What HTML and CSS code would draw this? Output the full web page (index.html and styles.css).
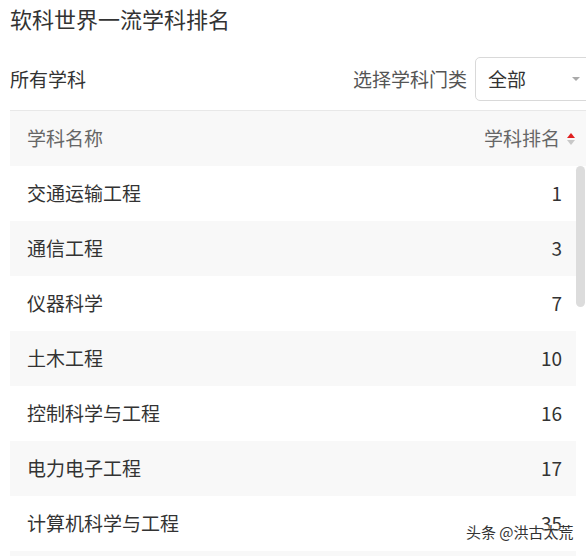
FILE: index.html
```html
<!DOCTYPE html>
<html lang="zh">
<head>
<meta charset="utf-8">
<link rel="stylesheet" href="styles.css">
</head>
<body>
<div class="page">
  <h1 class="title">软科世界一流学科排名</h1>
  <div class="filter">
    <span class="filter-label">所有学科</span>
    <div class="filter-right">
      <span class="select-label">选择学科门类</span>
      <div class="select">
        <span>全部</span>
        <span class="caret"></span>
      </div>
    </div>
  </div>
  <div class="table">
    <div class="thead">
      <span>学科名称</span>
      <span class="sort-head">学科排名
        <span class="sorter"><i class="up"></i><i class="down"></i></span>
      </span>
    </div>
    <div class="tbody-wrap">
      <div class="tbody">
        <div class="row"><span>交通运输工程</span><span>1</span></div>
        <div class="row alt"><span>通信工程</span><span>3</span></div>
        <div class="row"><span>仪器科学</span><span>7</span></div>
        <div class="row alt"><span>土木工程</span><span>10</span></div>
        <div class="row"><span>控制科学与工程</span><span>16</span></div>
        <div class="row alt"><span>电力电子工程</span><span>17</span></div>
        <div class="row"><span>计算机科学与工程</span><span>35</span></div>
        <div class="row alt"><span>&nbsp;</span><span>&nbsp;</span></div>
      </div>
      <div class="scrollbar"><div class="thumb"></div></div>
    </div>
  </div>
</div>
<div class="watermark">头条 @洪古太荒</div>
</body>
</html>
```

FILE: styles.css
```css
html, body {
  margin: 0;
  padding: 0;
  background: #fff;
  overflow: hidden;
  width: 586px;
  height: 556px;
}
body {
  font-family: "Noto Sans CJK SC", "Noto Sans", sans-serif;
  color: #333;
  position: relative;
}
.page {
  padding-left: 10px;
}
.title {
  margin: 0;
  font-size: 22px;
  font-weight: normal;
  line-height: 36px;
  height: 38px;
  color: #333;
}
.filter {
  margin-top: 19px;
  height: 44px;
  padding-bottom: 9px;
  border-bottom: 1px solid #e8e8e8;
  display: flex;
  align-items: center;
  justify-content: space-between;
}
.filter-label {
  font-size: 19px;
  color: #333;
  padding-bottom: 2px;
}
.filter-right {
  display: flex;
  align-items: center;
  gap: 8px;
  margin-right: -12px;
}
.select-label {
  font-size: 19px;
  color: #555;
  padding-bottom: 2px;
}
.select {
  box-sizing: border-box;
  width: 123px;
  height: 44px;
  border: 1px solid #d9d9d9;
  border-radius: 5px;
  display: flex;
  align-items: center;
  justify-content: space-between;
  padding: 0 17px 2px 12px;
  font-size: 19px;
  color: #333;
}
.caret {
  width: 0;
  height: 0;
  margin-top: 2px;
  border-left: 4px solid transparent;
  border-right: 4px solid transparent;
  border-top: 4px solid #aaa;
}
.thead {
  height: 55px;
  box-sizing: border-box;
  background: #f8f8f8;
  display: flex;
  align-items: center;
  justify-content: space-between;
  padding: 0 11px 2px 17px;
  font-size: 19px;
  color: #666;
}
.sort-head {
  display: flex;
  align-items: center;
  gap: 7px;
}
.sorter {
  display: flex;
  flex-direction: column;
  gap: 2px;
  margin-top: 2px;
}
.sorter i {
  display: block;
  width: 0;
  height: 0;
  border-left: 4px solid transparent;
  border-right: 4px solid transparent;
}
.sorter .up {
  border-bottom: 5px solid #e02020;
}
.sorter .down {
  border-top: 5px solid #c8c8c8;
}
.tbody-wrap {
  display: flex;
}
.tbody {
  width: 566px;
}
.row {
  height: 55px;
  box-sizing: border-box;
  display: flex;
  align-items: center;
  justify-content: space-between;
  padding: 0 14px 2px 17px;
  font-size: 19px;
  color: #333;
  background: #fff;
}
.row.alt {
  background: #f8f8f8;
}
.scrollbar {
  width: 10px;
}
.thumb {
  width: 9px;
  height: 141px;
  background: #dcdcdc;
  border-radius: 5px;
}
.watermark {
  position: absolute;
  left: 466px;
  top: 521px;
  font-size: 15px;
  color: #333;
  text-shadow: 0 0 2px #fff, 0 0 2px #fff;
  white-space: nowrap;
}
```
